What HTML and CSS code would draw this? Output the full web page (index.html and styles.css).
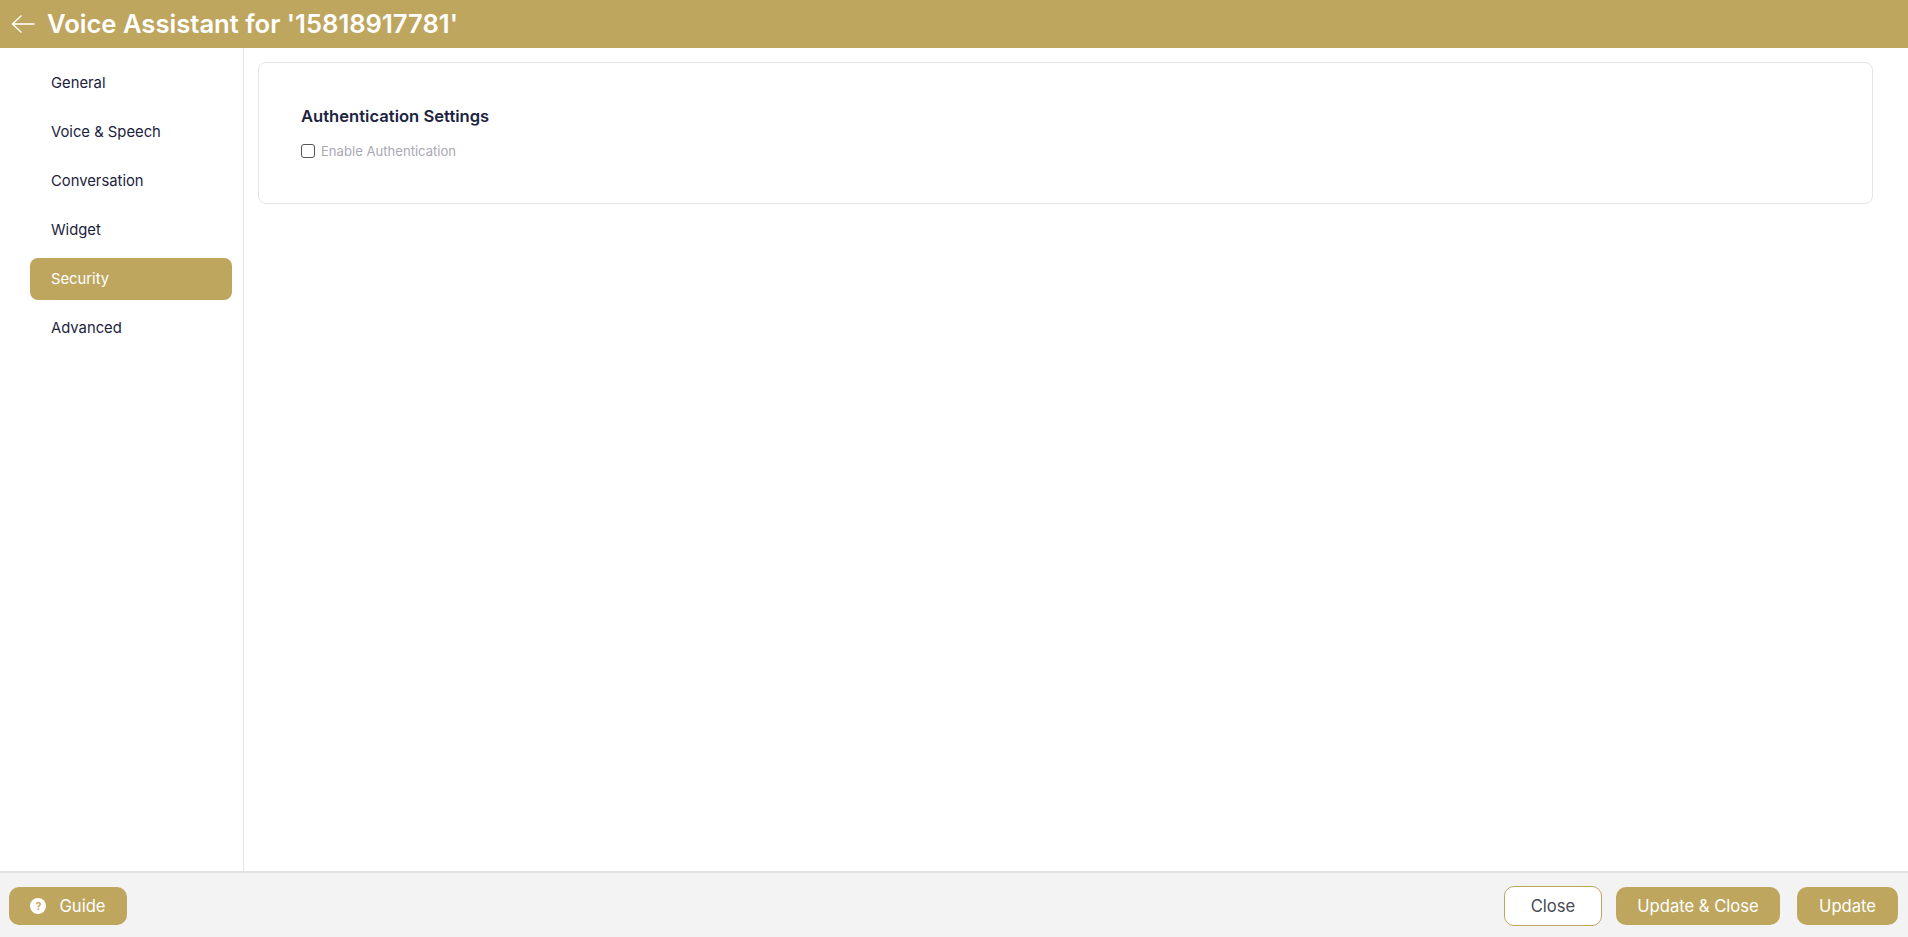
FILE: index.html
```html
<!DOCTYPE html>
<html lang="en">
<head>
<meta charset="utf-8">
<title>Voice Assistant</title>
<link rel="stylesheet" href="styles.css">
</head>
<body>
<div class="page">
  <header class="topbar">
    <svg class="back" width="24" height="20" viewBox="0 0 24 20" fill="none" stroke="#fff" stroke-width="1.4"><path d="M23.5 10H1.5M10.5 1.5L1.5 10l9 8.5"/></svg>
    <h1 class="title">Voice Assistant for '15818917781'</h1>
  </header>
  <div class="main">
    <nav class="sidebar">
      <a class="nav-item">General</a>
      <a class="nav-item">Voice &amp; Speech</a>
      <a class="nav-item">Conversation</a>
      <a class="nav-item">Widget</a>
      <a class="nav-item active">Security</a>
      <a class="nav-item">Advanced</a>
    </nav>
    <section class="content">
      <div class="card">
        <h2 class="card-title">Authentication Settings</h2>
        <label class="check"><span class="box"></span><span class="check-label">Enable Authentication</span></label>
      </div>
    </section>
  </div>
  <footer class="footer">
    <button class="btn guide"><span class="help">?</span>Guide</button>
    <div class="actions">
      <button class="btn outline">Close</button>
      <button class="btn update-close">Update &amp; Close</button>
      <button class="btn update">Update</button>
    </div>
  </footer>
</div>
</body>
</html>
```
FILE: styles.css
```css
* { box-sizing: border-box; }
html, body { margin: 0; height: 100%; }
body { font-family: Inter, "Open Sans", sans-serif; background: #fff; color: #1c2340; }
.page { display: flex; flex-direction: column; height: 937px; overflow: hidden; }
.topbar { height: 48px; background: #bea65f; display: flex; align-items: center; padding-left: 11px; gap: 12px; flex: none; }
.back { flex: none; }
.title { margin: 0; color: #fff; font-size: 25.6px; font-weight: 600; line-height: 48px; white-space: nowrap; }
.main { flex: 1; display: flex; min-height: 0; }
.sidebar { width: 244px; flex: none; border-right: 1px solid #e4e4e4; padding: 14px 11px 0 30px; display: flex; flex-direction: column; gap: 7px; }
.nav-item { height: 42px; display: flex; align-items: center; padding: 0 0 1px 21px; border-radius: 8px; font-size: 14.8px; color: #1c2340; }
.nav-item.active { background: #bea65f; color: #fff; }
.content { flex: 1; padding: 14px 35px 0 14px; }
.card { height: 142px; border: 1px solid #e4e4ea; border-radius: 8px; padding: 43px 41px 0 42px; }
.card-title { margin: 0; font-size: 16.6px; font-weight: 600; line-height: 20px; color: #1c2340; }
.check { display: flex; align-items: center; gap: 6px; margin-top: 18px; }
.box { width: 14px; height: 14px; border: 1px solid #555; border-radius: 3px; background: #fff; }
.check-label { font-size: 13.1px; line-height: 14px; color: #aaa8b4; }
.footer { height: 66px; flex: none; background: #f3f3f3; border-top: 2px solid #e2e2e2; display: flex; justify-content: space-between; align-items: center; padding: 2px 10px 0 9px; }
.actions { display: flex; align-items: center; gap: 14px; }
.btn { height: 38px; border: 0; border-radius: 10px; background: #bea65f; color: #fff; font-family: inherit; font-size: 16.6px; padding: 0; display: flex; align-items: center; justify-content: center; }
.guide { width: 118px; gap: 13px; }
.help { width: 16px; height: 16px; border-radius: 50%; background: #fff; color: #bea65f; font-size: 10px; font-weight: 700; display: flex; align-items: center; justify-content: center; }
.outline { width: 98px; height: 40px; background: #fff; color: #4a4a55; border: 1px solid #bea65f; }
.update-close { width: 164px; }
.update { width: 101px; margin-left: 3px; }
```
